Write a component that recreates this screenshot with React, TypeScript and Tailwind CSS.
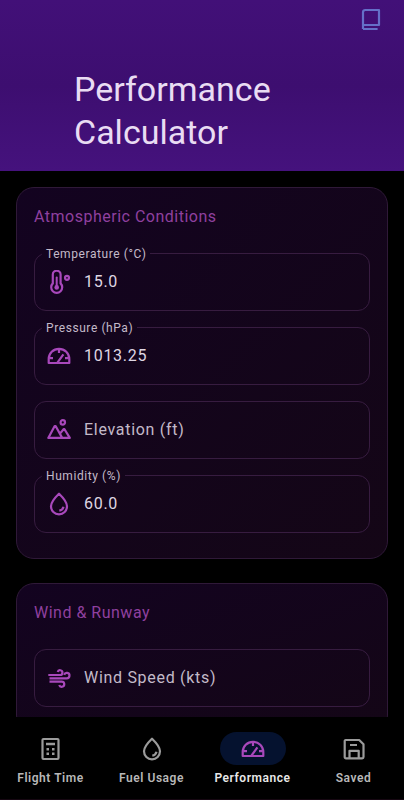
import React from 'react';

interface IconProps {
  className?: string;
  children?: React.ReactNode;
}

const Svg: React.FC<IconProps> = ({ className = '', children }) => (
  <svg
    viewBox="0 0 24 24"
    fill="none"
    stroke="currentColor"
    strokeWidth="2.2"
    strokeLinejoin="round"
    className={`h-6 w-6 shrink-0 ${className}`}
  >
    {children}
  </svg>
);

const BookIcon = () => (
  <Svg>
    <path d="M4 21V4.2A2.2 2.2 0 0 1 6.2 2H20v15H4M4 21h14.6" />
  </Svg>
);

const ThermometerIcon = () => (
  <Svg>
    <path d="M5.8 13.4V4.6a3.9 3.9 0 0 1 7.8 0v8.8a5.5 5.5 0 1 1-7.8 0z" />
    <path d="M9.7 7.5v9" strokeLinecap="round" strokeWidth="2" />
    <circle cx="9.7" cy="17.4" r="2.3" fill="currentColor" stroke="none" />
    <circle cx="20" cy="7.8" r="2" />
  </Svg>
);

const GaugeIcon = () => (
  <Svg>
    <path d="M1.7 19v-4a10.3 10.2 0 0 1 20.6 0v4z" />
    <path d="M12 5v4M2.5 14.2H6M18 14.2h3.5M10.4 18.6l6-8.2" />
  </Svg>
);

const MountainIcon = () => (
  <Svg>
    <path d="M15.2 19.9 8.6 8h-.9L1.3 19.9h21.5l-5.3-8.7h-.9l-3.4 4.2" />
    <circle cx="15.8" cy="4.4" r="2.2" />
  </Svg>
);

const DropIcon = () => (
  <Svg>
    <path d="M12 1.7C9 4.6 4 9.4 4 14.3a8 8 0 0 0 16 0C20 9.4 15 4.6 12 1.7z" />
    <path d="M12.3 18.7c2.3-.4 3.7-1.7 4.2-3.9" />
  </Svg>
);

const WindIcon = () => (
  <Svg>
    <path d="M1.3 9H13a2.4 2.4 0 1 0-2.3-3" />
    <path d="M2.5 12.3h17.3a2.7 2.7 0 1 0-2.6-3.5" />
    <path d="M2.5 15.6h12.2a2.6 2.6 0 1 1-2.5 3.4" />
  </Svg>
);

const CalculatorIcon = () => (
  <Svg>
    <rect x="3.5" y="2" width="16" height="20" rx="1" />
    <path d="M7 7h9M7.5 12.2H10M13 12.2h2.5M7.5 16.8H10M13 16.8h2.5" strokeWidth="2.4" />
  </Svg>
);

const SaveIcon = () => (
  <Svg>
    <path d="M3.8 3h13.4l4.3 4.3V20a1.3 1.3 0 0 1-1.3 1.3H4A1.3 1.3 0 0 1 2.7 20V4A1 1 0 0 1 3.8 3z" />
    <path d="M7.5 21v-7.2h9.2V21M8 8h7" />
  </Svg>
);

interface FieldProps {
  icon: React.ReactNode;
  label: string;
  value?: string;
}

const Field: React.FC<FieldProps> = ({ icon, label, value }) => {
  if (!value) {
    return (
      <div className="flex h-[58px] items-center gap-[13px] rounded-xl border border-[#371c40] pl-3 text-[#c3bac9]">
        <span className="text-[#a848bb]">{icon}</span>
        <span className="text-base tracking-[0.7px]">{label}</span>
      </div>
    );
  }

  return (
    <fieldset className="-mt-2 h-[66px] rounded-xl border border-[#371c40] px-[7px]">
      <legend className="h-4 px-1 text-xs leading-[18px] tracking-[0.58px] text-[#c3bac9]">{label}</legend>
      <div className="flex h-[41px] items-center gap-[13px] pl-[5px]">
        <span className="text-[#a848bb]">{icon}</span>
        <span className="text-base tracking-[0.7px] text-[#dfd6e3]">{value}</span>
      </div>
    </fieldset>
  );
};

const Card: React.FC<{ title: string; children: React.ReactNode }> = ({ title, children }) => (
  <section className="rounded-[18px] border-[1.5px] border-[#2f1938] bg-linear-to-br from-[#130320] to-[#140616] px-[17px] pb-[25px] pt-[17px]">
    <h2 className="mb-6 text-base leading-6 tracking-[0.5px] text-[#8f409f]">{title}</h2>
    <div className="flex flex-col gap-4">{children}</div>
  </section>
);

const tabs = [
  { name: 'Flight Time', icon: <CalculatorIcon /> },
  { name: 'Fuel Usage', icon: <DropIcon /> },
  { name: 'Performance', icon: <GaugeIcon />, active: true },
  { name: 'Saved', icon: <SaveIcon /> }
];

const App: React.FC = () => {
  return (
    <div className="flex h-[800px] w-full flex-col overflow-hidden bg-black font-['Roboto',sans-serif]">
      <header className="h-[171px] shrink-0 bg-linear-to-b from-[#421078] via-[#3d0e70] to-[#45127d]">
        <div className="flex h-[68px] justify-end pr-[21px] pt-2 text-[#6570c8]">
          <BookIcon />
        </div>
        <h1 className="w-60 pl-[74px] text-[34px] leading-[43px] text-[#e9dcf3]">
          Performance Calculator
        </h1>
      </header>

      <main className="flex min-h-0 flex-1 flex-col gap-6 overflow-hidden px-4 pt-4 *:shrink-0">
        <Card title="Atmospheric Conditions">
          <Field icon={<ThermometerIcon />} label="Temperature (°C)" value="15.0" />
          <Field icon={<GaugeIcon />} label="Pressure (hPa)" value="1013.25" />
          <Field icon={<MountainIcon />} label="Elevation (ft)" />
          <Field icon={<DropIcon />} label="Humidity (%)" value="60.0" />
        </Card>
        <Card title="Wind & Runway">
          <Field icon={<WindIcon />} label="Wind Speed (kts)" />
        </Card>
      </main>

      <nav className="grid h-[83px] shrink-0 grid-cols-4 border-b border-[#160712] bg-black pt-[15px]">
        {tabs.map(tab => (
          <button key={tab.name} type="button" className="flex flex-col items-center gap-1">
            <span
              className={
                tab.active
                  ? 'flex h-[33px] w-[66px] items-center justify-center rounded-full bg-[#05122f] text-[#a848bb]'
                  : 'flex h-[33px] w-[66px] items-center justify-center text-[#9b9b9b]'
              }
            >
              {tab.icon}
            </span>
            <span
              className={
                tab.active
                  ? 'text-xs font-semibold leading-[18px] tracking-[0.54px] text-[#e8e8e8]'
                  : 'text-xs font-semibold leading-[18px] tracking-[0.54px] text-[#b8b8b8]'
              }
            >
              {tab.name}
            </span>
          </button>
        ))}
      </nav>
    </div>
  );
};

export default App;
